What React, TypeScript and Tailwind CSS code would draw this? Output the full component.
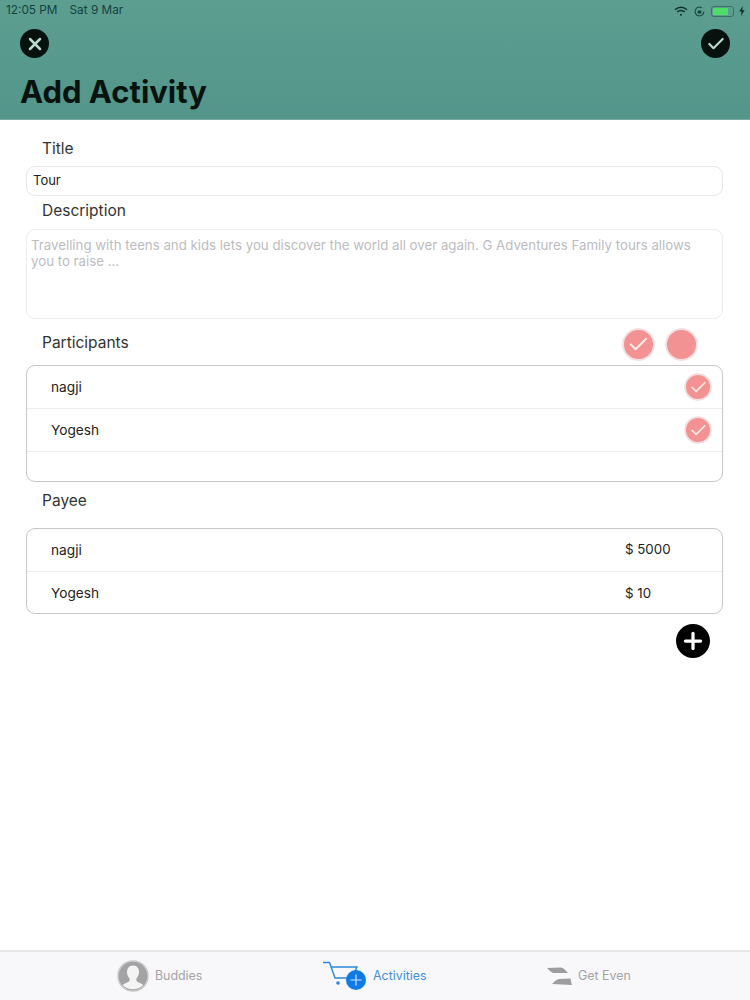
import React from 'react';
import { Check, X, Plus } from 'lucide-react';

const FONT = "font-['Inter','Liberation_Sans',sans-serif]";

// pink round tick used for the participants
const PinkDot = ({ size, tick = true }: { size: 'lg' | 'sm'; tick?: boolean }) => (
  <div
    className={`rounded-full bg-[#f39292] border-[#f3dfe0] border-2 outline outline-white flex items-center justify-center ${
      size === 'lg' ? 'w-[33px] h-[33px]' : 'w-[28px] h-[28px]'
    }`}
  >
    {tick && <Check className={`text-[#fde9e6] ${size === 'lg' ? 'w-[23px] h-[23px]' : 'w-[19px] h-[19px]'}`} strokeWidth={2.2} />}
  </div>
);

const Label = ({ children, className = '' }: { children: React.ReactNode; className?: string }) => (
  <div className={`pl-[42px] text-[15.500px] leading-[20px] text-[#333333] ${className}`}>{children}</div>
);

const StatusBar = () => (
  <div className="h-[20px] pt-[2px] flex items-center justify-between pl-[6px] pr-[5px] text-[11.800px] text-[#15423c]">
    <div className="flex gap-[12px]">
      <span>12:05 PM</span>
      <span>Sat 9 Mar</span>
    </div>
    <div className="flex items-center">
      <svg width="14" height="11" viewBox="0 0 15 11" fill="none" stroke="#0d2e2a" strokeWidth="1.6">
        <path d="M1 3.600C5 0.400 10 0.400 14 3.600" />
        <path d="M3.400 6C5.900 4.200 9.100 4.200 11.600 6" />
        <circle cx="7.500" cy="9" r="1.100" fill="#0d2e2a" stroke="none" />
      </svg>
      <svg width="11" height="11" viewBox="0 0 12 12" fill="none" stroke="#15423c" strokeWidth="1.100" className="ml-[6px]">
        <path d="M10.800 6A4.800 4.800 0 1 1 8.600 2" />
        <rect x="4" y="5" width="4" height="3.200" fill="#15423c" stroke="none" />
      </svg>
      <div className="ml-[6px] w-[23px] h-[11px] rounded-[3px] border border-[#3f6f68] p-[1px]">
        <div className="h-full w-[15px] rounded-[1px] bg-[#4fdc66]" />
      </div>
      <svg width="6" height="10" viewBox="0 0 6 10" fill="#0d2e2a" className="ml-[5px]">
        <path d="M3.600 0L0.400 5.600H2.600L2 10L5.600 4.200H3.300Z" />
      </svg>
    </div>
  </div>
);

const Header = () => (
  <div className="h-[120px] bg-gradient-to-b from-[#5c9f91] to-[#53958a] border-b border-[#7fa8a0]">
    <StatusBar />
    <div className="mt-[9px] pl-[20px] pr-[20px] flex justify-between">
      <div className="w-[29px] h-[29px] rounded-full bg-[#07120f] flex items-center justify-center">
        <X className="w-[20px] h-[20px] text-[#b9d8cf]" strokeWidth={3} />
      </div>
      <div className="w-[29px] h-[29px] rounded-full bg-[#07120f] flex items-center justify-center">
        <Check className="w-[20px] h-[20px] text-[#b9d8cf]" strokeWidth={2.6} />
      </div>
    </div>
    <div className="mt-[14px] pl-[20px] text-[31px] leading-[40px] font-bold text-[#08130f]">Add Activity</div>
  </div>
);

const Row = ({ name, last, children }: { name: string; last?: boolean; children: React.ReactNode }) => (
  <div className={`flex items-center justify-between pl-[24px] h-[43px] ${last ? '' : 'border-b border-[#ececec]'}`}>
    <span className="text-[13.700px] text-[#222222]">{name}</span>
    {children}
  </div>
);

const Tabs = () => (
  <div className="h-[50px] bg-[#f8f8fa] border-t-2 border-[#e6e6e8] flex items-center text-[12.400px]">
    <div className="ml-[117px] flex items-center gap-[6px] w-[205px]">
      <svg width="32" height="32" viewBox="0 0 32 32">
        <circle cx="16" cy="16" r="15" fill="#a3a3a5" stroke="#c9c9cb" strokeWidth="1.500" />
        <path
          d="M16 5.500c-4 0-6 3-6 6.500 0 3 1.200 5 2.600 6.500.5 1.600-.3 3-2 3.800-2 .9-3.600 1.600-4.800 3a15 15 0 0 0 20.400 0c-1.200-1.400-2.800-2.100-4.800-3-1.700-.8-2.500-2.200-2-3.800 1.400-1.500 2.600-3.500 2.600-6.500 0-3.500-2-6.500-6-6.500z"
          fill="#f4f4f5"
        />
      </svg>
      <span className="text-[#a3a3a6]">Buddies</span>
    </div>
    <div className="flex items-center w-[225px]">
      <svg width="46" height="30" viewBox="0 0 46 30" fill="none" className="mr-[5px] -mt-[2px]">
        <path d="M1 2.500H7.500L13 18H30L35 7H9" stroke="#2d86dc" strokeWidth="1.400" />
        <circle cx="16" cy="23" r="1.800" fill="#2d86dc" />
        <circle cx="34" cy="20" r="10" fill="#0f7be6" />
        <path d="M28.500 20H39.500M34 14.500V25.500" stroke="#cfe5fb" strokeWidth="1.200" />
      </svg>
      <span className="text-[#3f8fdd]">Activities</span>
    </div>
    <div className="flex items-center gap-[5px]">
      <svg width="26" height="18" viewBox="0 0 26 18" fill="#9d9d9f">
        <path d="M0 1L14 0.500C18 1.500 19 4 21 6H6C4 5 2 3 0 1Z" />
        <path d="M5 17L25 18C24 16 24 13 23.500 11.500L12 12C9 12.500 7 15 5 17Z" />
      </svg>
      <span className="text-[#a3a3a6]">Get Even</span>
    </div>
  </div>
);

export default function App() {
  return (
    <div className={`w-[750px] h-[1000px] bg-white flex flex-col ${FONT}`}>
      <Header />
      <div className="flex-1 flex flex-col">
        <Label className="mt-[19px]">Title</Label>
        <div className="ml-[26px] mr-[27px] mt-[7px] h-[30px] rounded-[9px] border border-[#e6e6e6] flex items-center pl-[6px] text-[13px] text-[#222222]">
          Tour
        </div>
        <Label className="mt-[5px]">Description</Label>
        <div className="ml-[26px] mr-[27px] mt-[8px] h-[90px] rounded-[9px] border border-[#ececec] pl-[4px] pr-[20px] pt-[7px] text-[13.250px] leading-[16px] text-[#bcbcc0]">
          Travelling with teens and kids lets you discover the world all over again. G Adventures Family tours allows you to raise ...
        </div>
        <div className="mt-[5px] h-[40px] flex items-center justify-between pr-[52px]">
          <Label className="mb-[2px]">Participants</Label>
          <div className="flex gap-[10px]">
            <PinkDot size="lg" />
            <PinkDot size="lg" tick={false} />
          </div>
        </div>
        <div className="ml-[26px] mr-[27px] mt-[1px] h-[117px] rounded-[9px] border border-[#c6c6c8]">
          <Row name="nagji"><div className="mr-[10px]"><PinkDot size="sm" /></div></Row>
          <Row name="Yogesh"><div className="mr-[10px]"><PinkDot size="sm" /></div></Row>
        </div>
        <Label className="mt-[9px]">Payee</Label>
        <div className="ml-[26px] mr-[27px] mt-[17px] h-[86px] rounded-[9px] border border-[#c6c6c8]">
          <Row name="nagji"><span className="w-[97px] text-[13.300px] text-[#222222]">$ 5000</span></Row>
          <Row name="Yogesh" last><span className="w-[97px] text-[13.300px] text-[#222222]">$ 10</span></Row>
        </div>
        <div className="flex justify-end pr-[40px] mt-[10px]">
          <div className="w-[34px] h-[34px] rounded-full bg-black flex items-center justify-center">
            <Plus className="w-[26px] h-[26px] text-white" strokeWidth={3} />
          </div>
        </div>
      </div>
      <Tabs />
    </div>
  );
}
